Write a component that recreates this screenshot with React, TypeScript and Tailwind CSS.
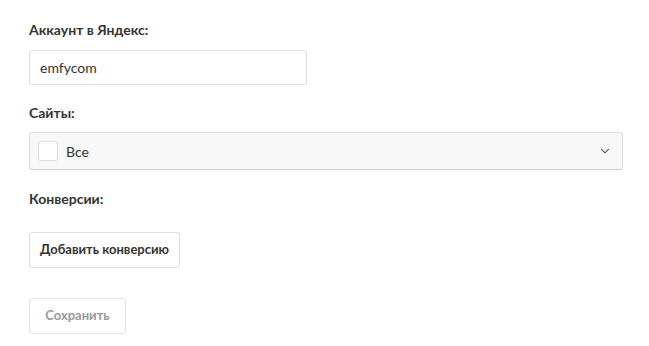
import { ChevronDown } from "lucide-react";

export default function App() {
  return (
    <div className="min-h-screen bg-white text-[#333] font-['Lato',sans-serif] text-[14px]">
      <div className="px-[29px] pt-[20px]">
        <label className="block font-bold text-[14px] leading-[20px] mb-[10px]">Аккаунт в Яндекс:</label>
        <div className="w-[278px] h-[35px] border border-[#ddd] rounded-[3px] flex items-center px-[10px]">
          <span>emfycom</span>
        </div>

        <label className="block font-bold text-[14px] leading-[20px] mt-[18px] mb-[9px]">Сайты:</label>
        <div className="w-[594px] h-[38px] border border-[#ddd] border-b-[#ccc] rounded-[3px] bg-[#f8f8f8] flex items-center pl-[8px] pr-[10px]">
          <span className="w-[20px] h-[20px] border border-[#ddd] rounded-[3px] bg-white" />
          <span className="ml-[8px] flex-1">Все</span>
          <ChevronDown size={14} strokeWidth={1.75} className="text-[#333]" />
        </div>

        <label className="block font-bold text-[14px] leading-[20px] mt-[19px]">Конверсии:</label>
        <button className="mt-[23px] h-[36px] px-[10px] border border-[#ddd] rounded-[3px] bg-white font-bold text-[13px]">
          Добавить конверсию
        </button>

        <div>
          <button className="mt-[30px] h-[36px] w-[97px] border border-[#e5e5e5] rounded-[3px] bg-white font-bold text-[13px] text-[#999]">
            Сохранить
          </button>
        </div>
      </div>
    </div>
  );
}
